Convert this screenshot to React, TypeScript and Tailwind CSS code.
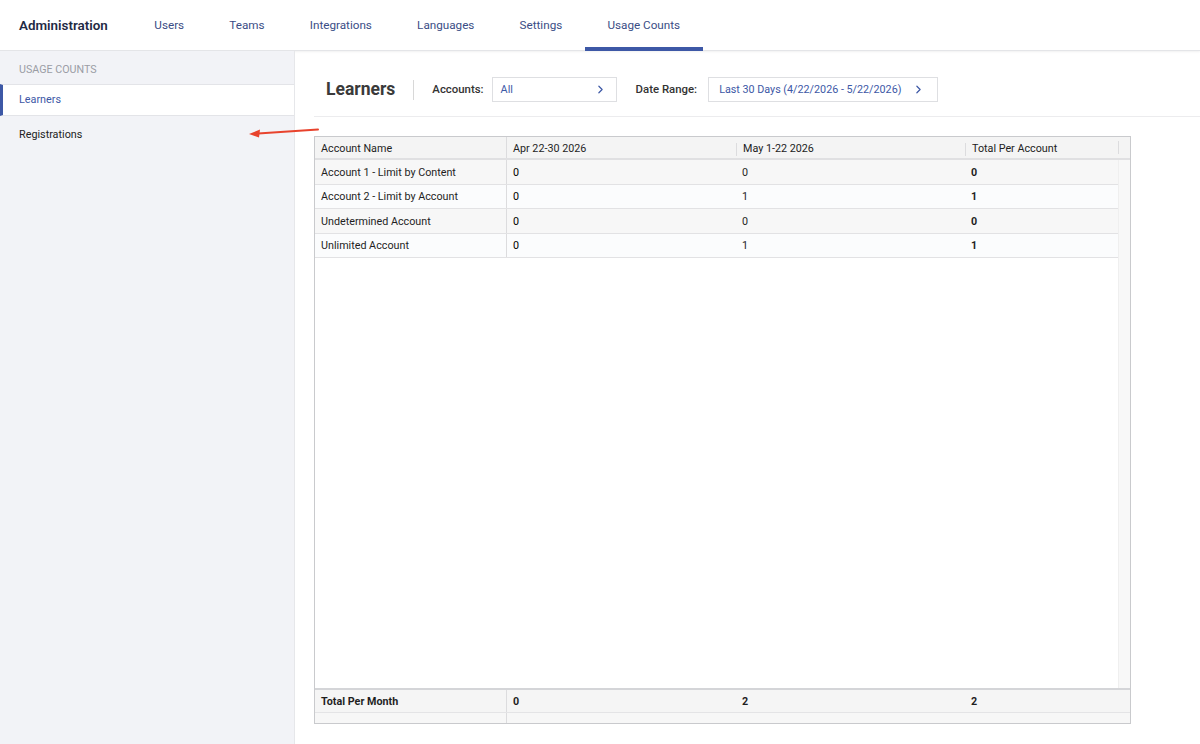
import React from 'react';
import { ChevronRight } from 'lucide-react';

const tabs = ['Users', 'Teams', 'Integrations', 'Languages', 'Settings', 'Usage Counts'];

const rows = [
  { name: 'Account 1 - Limit by Content', apr: '0', may: '0', total: '0' },
  { name: 'Account 2 - Limit by Account', apr: '0', may: '1', total: '1' },
  { name: 'Undetermined Account', apr: '0', may: '0', total: '0' },
  { name: 'Unlimited Account', apr: '0', may: '1', total: '1' },
];

// column template shared by header, body and footer
const cols = 'grid grid-cols-[192px_229px_229px_153px]';
const cell = 'pl-[6px] pt-[2px] flex items-center text-[#1f1f1f]';

export default function App() {
  return (
    <div className="relative w-[1200px] h-[744px] overflow-hidden bg-white font-['Roboto','Liberation_Sans',sans-serif] text-[#222]">
      {/* Top nav */}
      <header className="h-[51px] flex items-stretch border-b border-[#e4e5e8] shadow-[0_1px_2px_rgba(0,0,0,0.06)]">
        <div className="pl-[19px] pr-[24px] pt-[2px] flex items-center text-[13.4px] font-semibold text-[#1f2a44]">
          Administration
        </div>
        {tabs.map((t) => {
          const active = t === 'Usage Counts';
          return (
            <div key={t} className="relative px-[22.6px] pt-[2px] flex items-center text-[11.7px] text-[#3a4d85]">
              {t}
              {active && <span className="absolute left-0 right-0 bottom-[-1px] h-[4px] bg-[#3d58a6]" />}
            </div>
          );
        })}
      </header>

      <div className="flex h-[693px]">
        {/* Sidebar */}
        <aside className="w-[295px] shrink-0 bg-[#f2f3f7] border-r border-[#e6e7ea]">
          <div className="h-[33px] pl-[19px] flex items-center pt-[6px] text-[10.7px] text-[#9a9da5] uppercase">
            Usage Counts
          </div>
          <div className="h-[32px] bg-white border-y border-[#e3e4e8] border-l-[3px] border-l-[#3d58a6] pl-[16px] flex items-center text-[10.8px] text-[#3d58a6]">
            Learners
          </div>
          <div className="h-[38px] pl-[19px] flex items-center text-[10.8px] text-[#222]">Registrations</div>
        </aside>

        {/* Main */}
        <main className="flex-1 pl-[19px]">
          <div className="h-[66px] flex items-center pl-[12px] border-b border-[#ececee] pt-[12px]">
            <h1 className="text-[17.5px] font-bold text-[#3a3a3a] pr-[18px]">Learners</h1>
            <span className="w-px h-[20px] bg-[#d8d8d8] mr-[18px]" />
            <span className="text-[11.4px] font-medium text-[#333] mr-[8px]">Accounts:</span>
            <div className="w-[125px] h-[25px] border border-[#dedfe2] flex items-center justify-between pl-[8px] pr-[9px] text-[10.8px] text-[#3d58a6]">
              <span className="pt-[1px]">All</span>
              <ChevronRight size={13} strokeWidth={2.2} />
            </div>
            <span className="text-[11.4px] font-medium text-[#333] ml-[19px] mr-[11px]">Date Range:</span>
            <div className="w-[230px] h-[25px] border border-[#dedfe2] flex items-center justify-between pl-[10px] pr-[12px] text-[10.75px] text-[#3d58a6]">
              <span className="pt-[1px]">Last 30 Days (4/22/2026 - 5/22/2026)</span>
              <ChevronRight size={13} strokeWidth={2.2} />
            </div>
          </div>

          {/* Table */}
          <div className="mt-[19px] w-[817px] h-[588px] border border-[#c9cacd] flex flex-col text-[10.75px]">
            <div className="flex h-[23px] bg-[#f4f4f4] border-b-2 border-[#e0e0e2]">
              <div className={cols + ' flex-1'}>
                <div className={cell + ' pt-[3px] border-r border-[#dcdcde]'}>Account Name</div>
                <div className={cell + ' pt-[3px]'}>Apr 22-30 2026</div>
                <div className="flex items-center pt-[3px]">
                  <span className="w-px h-[13px] bg-[#dcdcde] mr-[6px]" />May 1-22 2026
                </div>
                <div className="flex items-center pt-[3px]">
                  <span className="w-px h-[13px] bg-[#dcdcde] mr-[6px]" />Total Per Account
                </div>
              </div>
              <div className="w-[13px] flex items-center">
                <span className="w-px h-[13px] bg-[#dcdcde]" />
              </div>
            </div>

            <div className="flex flex-1">
              <div className="flex-1">
                {rows.map((r, i) => (
                  <div
                    key={r.name}
                    className={cols + ' h-[24.5px] border-b border-[#e2e2e4] ' + (i % 2 === 0 ? 'bg-[#f7f7f7]' : 'bg-[#fbfcfd]')}
                  >
                    <div className={cell + ' border-r border-[#dcdcde]'}>{r.name}</div>
                    <div className={cell}><span className="text-black">{r.apr}</span></div>
                    <div className={cell}>{r.may}</div>
                    <div className={cell + ' font-bold'}>{r.total}</div>
                  </div>
                ))}
              </div>
              <div className="w-[13px] bg-[#f8f8f8] border-l border-[#efefef]" />
            </div>

            <div className="flex h-[25px] bg-[#f5f5f5] border-t-2 border-[#d4d5d8]">
              <div className={cols + ' flex-1 border-b border-[#e4e4e6] font-bold'}>
                <div className={cell + ' border-r border-[#dcdcde]'}>Total Per Month</div>
                <div className={cell}>0</div>
                <div className={cell}>2</div>
                <div className={cell}>2</div>
              </div>
              <div className="w-[13px] border-b border-[#e4e4e6]" />
            </div>
            <div className="flex h-[10px] bg-[#f7f7f7]">
              <div className={cols + ' flex-1'}>
                <div className="border-r border-[#dcdcde]" />
              </div>
              <div className="w-[13px]" />
            </div>
          </div>
        </main>
      </div>

      {/* Red annotation arrow */}
      <svg className="absolute left-[246px] top-[124px]" width="80" height="16" viewBox="0 0 80 16">
        <line x1="72" y1="5.5" x2="12" y2="9.5" stroke="#e8432d" strokeWidth="2" strokeLinecap="round" />
        <polygon points="3,10 14,5.5 13,13.5" fill="#e8432d" />
      </svg>
    </div>
  );
}
